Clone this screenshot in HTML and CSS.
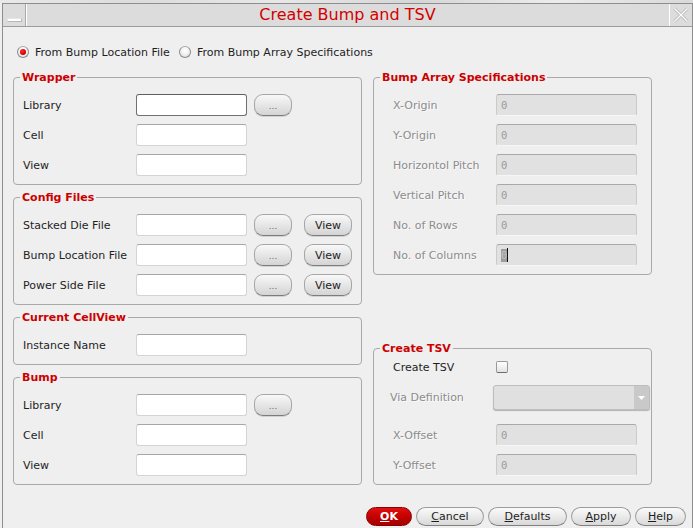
FILE: index.html
```html
<!DOCTYPE html>
<html>
<head>
<meta charset="utf-8">
<title>Create Bump and TSV</title>
<link rel="stylesheet" href="styles.css">
</head>
<body>
<div class="desk"></div>
<div class="window">
  <div class="titlebar">
    <div class="tb-btn tb-min"><span class="min-icon"></span></div>
    <div class="tb-title">Create Bump and TSV</div>
    <div class="tb-btn tb-close">
      <svg width="16" height="16" viewBox="0 0 16 16">
        <path d="M1.5 1.5 L14.5 14.5 M14.5 1.5 L1.5 14.5" stroke="#b8b8b8" stroke-width="3" fill="none"/>
        <path d="M1.5 1.5 L14.5 14.5 M14.5 1.5 L1.5 14.5" stroke="#ffffff" stroke-width="1.2" fill="none"/>
      </svg>
    </div>
  </div>
  <div class="content">
    <div class="mode-row">
      <div class="radio"><span class="radio-dot checked"></span><span>From Bump Location File</span></div>
      <div class="radio"><span class="radio-dot"></span><span>From Bump Array Specifications</span></div>
    </div>
    <div class="columns">
      <div class="col col-left">
        <section class="group">
          <div class="group-title">Wrapper</div>
          <div class="rows">
            <div class="row"><span class="lbl">Library</span><div class="field focus"></div><div class="btn-dots">...</div></div>
            <div class="row"><span class="lbl">Cell</span><div class="field"></div></div>
            <div class="row"><span class="lbl">View</span><div class="field"></div></div>
          </div>
        </section>
        <section class="group">
          <div class="group-title">Config Files</div>
          <div class="rows">
            <div class="row"><span class="lbl">Stacked Die File</span><div class="field"></div><div class="btn-dots">...</div><div class="btn-view">View</div></div>
            <div class="row"><span class="lbl">Bump Location File</span><div class="field"></div><div class="btn-dots">...</div><div class="btn-view">View</div></div>
            <div class="row"><span class="lbl">Power Side File</span><div class="field"></div><div class="btn-dots">...</div><div class="btn-view">View</div></div>
          </div>
        </section>
        <section class="group">
          <div class="group-title">Current CellView</div>
          <div class="rows">
            <div class="row"><span class="lbl">Instance Name</span><div class="field"></div></div>
          </div>
        </section>
        <section class="group">
          <div class="group-title">Bump</div>
          <div class="rows">
            <div class="row"><span class="lbl">Library</span><div class="field"></div><div class="btn-dots">...</div></div>
            <div class="row"><span class="lbl">Cell</span><div class="field"></div></div>
            <div class="row"><span class="lbl">View</span><div class="field"></div></div>
          </div>
        </section>
      </div>
      <div class="col col-right">
        <section class="group group-r">
          <div class="group-title">Bump Array Specifications</div>
          <div class="rows">
            <div class="row"><span class="lbl dim">X-Origin</span><div class="field off"><span class="num">0</span></div></div>
            <div class="row"><span class="lbl dim">Y-Origin</span><div class="field off"><span class="num">0</span></div></div>
            <div class="row"><span class="lbl dim">Horizontol Pitch</span><div class="field off"><span class="num">0</span></div></div>
            <div class="row"><span class="lbl dim">Vertical Pitch</span><div class="field off"><span class="num">0</span></div></div>
            <div class="row"><span class="lbl dim">No. of Rows</span><div class="field off"><span class="num">0</span></div></div>
            <div class="row"><span class="lbl dim">No. of Columns</span><div class="field off"><span class="num sel">0</span><span class="caret"></span></div></div>
          </div>
        </section>
        <section class="group group-r group-tsv">
          <div class="group-title">Create TSV</div>
          <div class="tsv-rows">
            <div class="row r1"><span class="lbl">Create TSV</span><span class="check"></span></div>
            <div class="row r2"><span class="lbl dim via">Via Definition</span><div class="combo"><span class="combo-text"></span><span class="combo-arrow"><svg width="7" height="4" viewBox="0 0 7 4"><path d="M0 0 L7 0 L3.5 4 Z" fill="#ffffff"/></svg></span></div></div>
            <div class="row r3"><span class="lbl dim">X-Offset</span><div class="field off"><span class="num">0</span></div></div>
            <div class="row r4"><span class="lbl dim">Y-Offset</span><div class="field off"><span class="num">0</span></div></div>
          </div>
        </section>
      </div>
    </div>
    <div class="footer">
      <div class="pbtn ok"><u>O</u>K</div>
      <div class="pbtn w-cancel"><u>C</u>ancel</div>
      <div class="pbtn w-defaults"><u>D</u>efaults</div>
      <div class="pbtn w-apply"><u>A</u>pply</div>
      <div class="pbtn w-help"><u>H</u>elp</div>
    </div>
  </div>
</div>
</body>
</html>
```
FILE: styles.css
```css
* { box-sizing: border-box; }
html, body { margin: 0; padding: 0; }
body {
  background: #efefef;
  font-family: "DejaVu Sans", "Liberation Sans", sans-serif;
  font-size: 11px;
  color: #1e1e1e;
  width: 693px;
  height: 528px;
  overflow: hidden;
}
.desk {
  height: 3px;
  background: linear-gradient(90deg, #e9e9e9 0, #dcdcdc 20%, #e8e8e8 40%, #d6d6d6 60%, #ececec 80%, #d9d9d9 100%);
}
.window {
  margin-left: 2px;
  border-top: 1px solid #8e8e8e;
  border-left: 1px solid #8e8e8e;
  border-right: 1px solid #8e8e8e;
  height: 525px;
  background: #efefef;
}
.titlebar {
  display: flex;
  height: 23px;
  background: #dcdcdc;
  border-bottom: 1px solid #9c9c9c;
}
.tb-btn {
  width: 23px;
  height: 22px;
  display: flex;
  align-items: center;
  justify-content: center;
  background: #dcdcdc;
}
.tb-min {
  border-right: 1px solid #a8a8a8;
  box-shadow: 1px 0 0 #ffffff;
}
.min-icon {
  display: block;
  width: 15px;
  height: 4px;
  margin-top: 9px;
  background: #ffffff;
  border: 1px solid #b8b8b8;
  border-top-color: #e4e4e4;
  border-left-color: #e4e4e4;
}
.tb-close {
  border-left: 1px solid #ffffff;
}
.tb-title {
  flex: 1;
  text-align: center;
  font-size: 16px;
  line-height: 22px;
  color: #d40000;
}
.content {
  padding: 19px 0 0 10px;
}
.mode-row {
  display: flex;
  align-items: center;
  height: 12px;
}
.radio {
  display: flex;
  align-items: center;
  margin-left: 4px;
}
.radio + .radio { margin-left: 9px; }
.radio-dot {
  width: 12px;
  height: 12px;
  border-radius: 50%;
  border: 1px solid #8c8c8c;
  border-top-color: #a9a9a9;
  background: radial-gradient(circle at 50% 35%, #ffffff 0, #f4f4f4 40%, #d6d6d6 100%);
  display: flex;
  align-items: center;
  justify-content: center;
  margin-right: 6px;
}
.radio-dot.checked::after {
  content: "";
  width: 6px;
  height: 6px;
  border-radius: 50%;
  background: radial-gradient(circle at 40% 35%, #ff3030 0, #d00000 60%, #a00000 100%);
}
.columns {
  display: flex;
  gap: 11px;
  margin-top: 19px;
}
.col {
  display: flex;
  flex-direction: column;
}
.col-left { width: 349px; gap: 12px; }
.col-right { width: 279px; }
.group {
  border: 1px solid #a9a9a9;
  border-radius: 4px;
  padding: 0 0 8px 0;
}
.group-title {
  width: fit-content;
  height: 13px;
  line-height: 13px;
  margin: -7px 0 0 6px;
  padding: 0 2px;
  background: #efefef;
  color: #cc0000;
  font-weight: bold;
}
.rows {
  display: flex;
  flex-direction: column;
  gap: 8px;
  margin-top: 10px;
}
.rows, .tsv-rows { padding-left: 9px; }
.group-r .rows, .group-r .tsv-rows { padding-left: 19px; }
.row {
  display: flex;
  align-items: center;
  height: 22px;
}
.lbl {
  width: 113px;
  flex: none;
  white-space: nowrap;
}
.group-r .lbl { width: 103px; }
.lbl.dim {
  color: #8c8c8c;
  text-shadow: 1px 1px 0 rgba(255,255,255,0.7);
}
.field {
  width: 111px;
  height: 22px;
  flex: none;
  background: #ffffff;
  border: 1px solid #d4d4d4;
  border-top-color: #a6a6a6;
  border-radius: 3px;
  display: flex;
  align-items: center;
  padding-left: 4px;
}
.field.focus {
  border-color: #707070;
  border-top-color: #5e5e5e;
}
.group-r .field { width: 141px; }
.field.off {
  background: #e1e1e1;
  border-color: #cbcbcb;
  border-top-color: #a9a9a9;
  border-bottom-color: #f6f6f6;
}
.num {
  font-family: "DejaVu Sans Mono", monospace;
  font-size: 10.5px;
  color: #9a9a9a;
  line-height: 13px;
}
.num.sel {
  background: #9c9c9c;
  color: #c4c4c4;
}
.caret {
  width: 1px;
  height: 14px;
  background: #111;
}
.btn-dots, .btn-view {
  height: 22px;
  flex: none;
  display: flex;
  align-items: center;
  justify-content: center;
  border: 1px solid #a6a6a6;
  border-bottom-color: #7c7c7c;
  border-radius: 9px;
  background: linear-gradient(#f8f8f8, #e8e8e8 45%, #d4d4d4);
  box-shadow: 0 1px 0 rgba(0,0,0,0.12);
}
.btn-dots {
  width: 38px;
  margin-left: 7px;
  color: #6a6a6a;
  font-size: 9px;
  padding-top: 2px;
}
.btn-view {
  width: 48px;
  margin-left: 12px;
  color: #1e1e1e;
}
.group-tsv {
  margin-top: auto;
}
.tsv-rows {
  display: flex;
  flex-direction: column;
  margin-top: 1px;
}
.r2 { margin-top: 7px; height: 25px; }
.r3 { margin-top: 14px; }
.r4 { margin-top: 8px; }
.check {
  width: 12px;
  height: 12px;
  border: 1px solid #9a9a9a;
  border-bottom-color: #6e6e6e;
  border-radius: 2px;
  background: linear-gradient(#ffffff, #e2e2e2);
  margin-top: -1px;
}
.lbl.via {
  margin-left: -3px;
}
.combo {
  width: 157px;
  height: 25px;
  flex: none;
  display: flex;
  background: #e0e0e0;
  border: 1px solid #bdbdbd;
  border-radius: 3px;
  box-shadow: 0 1px 1px rgba(0,0,0,0.25);
  overflow: hidden;
}
.combo-text { flex: 1; }
.combo-arrow {
  width: 15px;
  background: #c9c9c9;
  display: flex;
  align-items: center;
  justify-content: center;
}
.footer {
  display: flex;
  gap: 4px;
  margin: 22px 0 0 353px;
}
.pbtn {
  height: 19px;
  display: flex;
  align-items: center;
  justify-content: center;
  border: 1px solid #9c9c9c;
  border-bottom-color: #808080;
  border-radius: 10px;
  background: linear-gradient(#fafafa, #ececec 45%, #d8d8d8);
  color: #1e1e1e;
  font-size: 11px;
}
.pbtn u { text-underline-offset: 1px; }
.pbtn.ok {
  width: 46px;
  background: linear-gradient(#e01010, #c40000 50%, #a40000);
  border-color: #8e0000;
  color: #ffffff;
  font-weight: bold;
}
.w-cancel { width: 68px; }
.w-defaults { width: 79px; }
.w-apply { width: 60px; }
.w-help { width: 51px; }
```
